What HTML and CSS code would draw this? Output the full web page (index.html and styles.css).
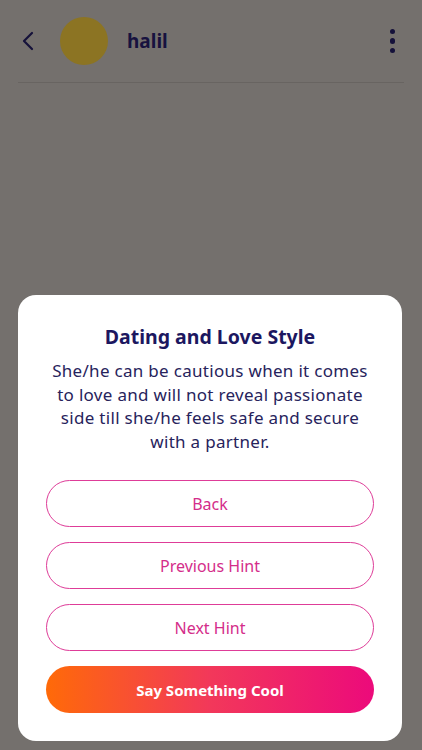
FILE: index.html
```html
<!DOCTYPE html>
<html>
<head>
<meta charset="utf-8">
<link rel="stylesheet" href="styles.css">
</head>
<body>
<div class="app">
  <header class="header">
    <svg class="back" width="14" height="20" viewBox="0 0 14 20"><path d="M11 2 L3 10 L11 18" fill="none" stroke="#15113a" stroke-width="2.2" stroke-linecap="round" stroke-linejoin="round"/></svg>
    <div class="avatar"></div>
    <div class="name">halil</div>
    <div class="kebab"><span></span><span></span><span></span></div>
  </header>
  <div class="divider"></div>
</div>
<div class="overlay">
  <div class="card">
    <h2 class="title">Dating and Love Style</h2>
    <p class="text">She/he can be cautious when it comes to love and will not reveal passionate side till she/he feels safe and secure with a partner.</p>
    <div class="actions">
      <button class="btn outline">Back</button>
      <button class="btn outline">Previous Hint</button>
      <button class="btn outline">Next Hint</button>
      <button class="btn primary">Say Something Cool</button>
    </div>
  </div>
</div>
</body>
</html>
```
FILE: styles.css
```css
* { box-sizing: border-box; }
html, body { margin: 0; padding: 0; }
body {
  width: 422px;
  height: 750px;
  background: #74706d;
  font-family: "Noto Sans", "DejaVu Sans", sans-serif;
  overflow: hidden;
}
.app { padding: 0 18px; }
.header {
  display: flex;
  align-items: center;
  height: 84px;
  padding-bottom: 2px;
}
.back { margin-left: 3px; }
.avatar {
  width: 48px;
  height: 48px;
  border-radius: 50%;
  background: #8c7423;
  margin-left: 25px;
}
.name {
  margin-left: 19px;
  font-size: 19px;
  font-weight: 700;
  color: #17123f;
  flex: 1;
}
.kebab {
  display: flex;
  flex-direction: column;
  gap: 4px;
  margin-right: 9px;
}
.kebab span {
  width: 5.5px; height: 5.5px; border-radius: 50%; background: #15113a;
}
.divider { height: 1px; background: #686461; margin-top: -2px; }
.overlay {
  position: fixed;
  inset: 0;
  display: flex;
  flex-direction: column;
  justify-content: flex-end;
  padding: 0 20px 9px 18px;
}
.card {
  background: #fff;
  border-radius: 18px;
  padding: 28px 28px 28px;
  text-align: center;
}
.title {
  margin: 0;
  font-size: 19.5px;
  line-height: 28px;
  font-weight: 700;
  color: #1c1760;
}
.text {
  margin: 8px 0 27px;
  padding: 0 2px;
  font-size: 17px;
  letter-spacing: 0.3px;
  line-height: 23.5px;
  color: #27235c;
}
.actions { display: flex; flex-direction: column; gap: 15px; }
.btn {
  height: 47px;
  border-radius: 24px;
  font-family: inherit;
  font-size: 16px;
  cursor: pointer;
}
.outline {
  background: #fff;
  border: 1.2px solid #de3c98;
  color: #d42d8a;
}
.primary {
  border: none;
  background: linear-gradient(90deg, #ff6a08 0%, #f2385a 50%, #ec0a7b 100%);
  color: #fff;
  font-weight: 700;
  font-size: 15px;
}
```
